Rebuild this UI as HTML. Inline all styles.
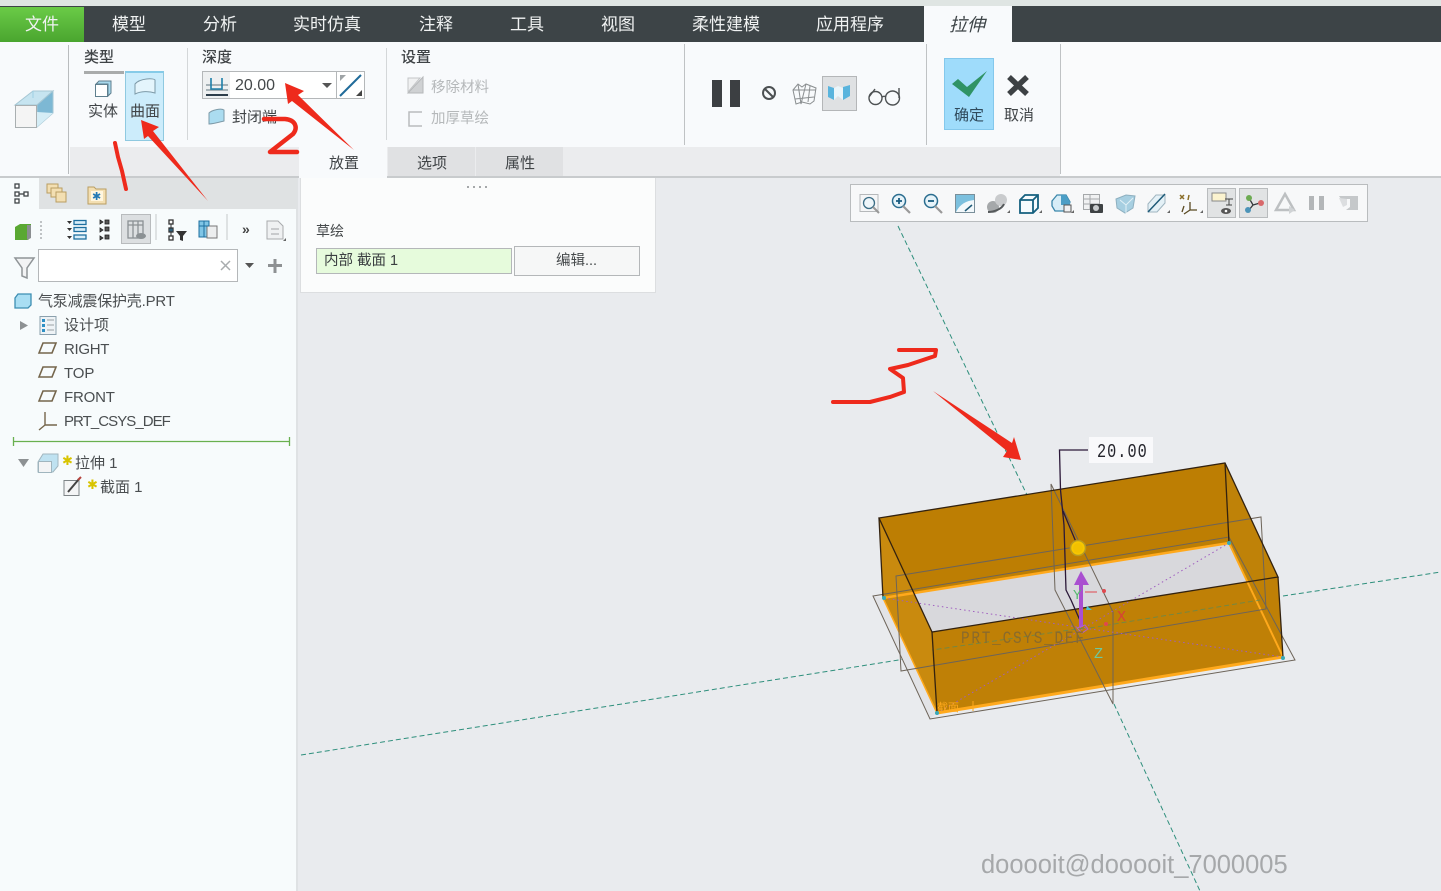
<!DOCTYPE html>
<html lang="zh"><head><meta charset="utf-8"><title>拉伸</title>
<style>
html,body{margin:0;padding:0}
body{width:1441px;height:891px;overflow:hidden;position:relative;background:#e9ebee;font-family:"Liberation Sans","Noto Sans CJK SC",sans-serif;color:#3c4043}
div,span.t{position:absolute}
.t{position:absolute;white-space:nowrap;line-height:20px}
.tab{color:#f0f2f2;font-size:17px;top:15px}
.s{font-size:15px;color:#3f4346}
.g{font-size:15px;color:#b5b8ba}
svg{position:absolute;overflow:visible}
</style></head><body>

<div style="left:0;top:0;width:1441px;height:6px;background:#dfe5e3"></div>
<div style="left:0;top:6px;width:1441px;height:36px;background:#3d4447"></div>
<div style="left:0;top:7px;width:84px;height:35px;background:linear-gradient(#6acb47,#4aa52f)"></div>
<div style="left:924px;top:6px;width:88px;height:36px;background:#f8fafc"></div>
<span class="t tab" style="left:25px">文件</span>
<span class="t tab" style="left:112px">模型</span>
<span class="t tab" style="left:203px">分析</span>
<span class="t tab" style="left:293px">实时仿真</span>
<span class="t tab" style="left:419px">注释</span>
<span class="t tab" style="left:510px">工具</span>
<span class="t tab" style="left:601px">视图</span>
<span class="t tab" style="left:692px">柔性建模</span>
<span class="t tab" style="left:816px">应用程序</span>
<span class="t tab" style="left:949px;color:#3d4447;font-style:italic;font-size:18px">拉伸</span>

<!-- ribbon -->
<div style="left:0;top:42px;width:1441px;height:135px;background:#f8fafc"></div>
<div style="left:1061px;top:42px;width:380px;height:135px;background:#fafbfc"></div>
<div style="left:70px;top:147px;width:990px;height:29px;background:#ebecee"></div>
<div style="left:0;top:176px;width:1441px;height:2px;background:#c8cbcd"></div>
<div style="left:299px;top:147px;width:88px;height:31px;background:#f8fafc"></div>
<div style="left:388px;top:147px;width:87px;height:29px;background:#e0e1e3"></div>
<div style="left:476px;top:147px;width:87px;height:29px;background:#e0e1e3"></div>
<div style="left:68px;top:45px;width:1px;height:129px;background:#b9bcbe"></div>
<div style="left:187px;top:48px;width:1px;height:92px;background:#d4d7d9"></div>
<div style="left:386px;top:48px;width:1px;height:92px;background:#d4d7d9"></div>
<div style="left:684px;top:44px;width:1px;height:101px;background:#bfc2c4"></div>
<div style="left:926px;top:44px;width:1px;height:101px;background:#bfc2c4"></div>
<div style="left:1060px;top:44px;width:1px;height:130px;background:#bfc2c4"></div>

<span class="t s" style="left:84px;top:48px;font-weight:500">类型</span>
<div style="left:84px;top:71px;width:40px;height:3px;background:#a9abab"></div>
<div style="left:125px;top:71px;width:39px;height:70px;box-sizing:border-box;background:#ccecfb;border:1px solid #8fc9e0;border-top:2px solid #86cbe8"></div>
<span class="t s" style="left:88px;top:102px">实体</span>
<span class="t s" style="left:130px;top:102px">曲面</span>
<span class="t s" style="left:202px;top:48px;font-weight:500">深度</span>
<div style="left:202px;top:71px;width:163px;height:28px;box-sizing:border-box;background:#fff;border:1px solid #b4b7b9"></div>
<div style="left:203px;top:72px;width:27px;height:26px;background:#eef0f1"></div>
<div style="left:336px;top:72px;width:1px;height:26px;background:#b4b7b9"></div>
<span class="t" style="left:235px;top:76px;font-size:16px;color:#44484a">20.00</span>
<span class="t s" style="left:232px;top:108px">封闭端</span>
<span class="t s" style="left:401px;top:48px;font-weight:500">设置</span>
<span class="t g" style="left:431px;top:78px;font-size:14.500px">移除材料</span>
<span class="t g" style="left:431px;top:109px;font-size:14.500px">加厚草绘</span>
<span class="t s" style="left:329px;top:154px">放置</span>
<span class="t s" style="left:417px;top:154px">选项</span>
<span class="t s" style="left:505px;top:154px">属性</span>
<div style="left:822px;top:76px;width:35px;height:35px;box-sizing:border-box;background:#dfe1e3;border:1px solid #b4b6b8"></div>
<div style="left:944px;top:58px;width:50px;height:72px;box-sizing:border-box;background:#9fdcfb;border:1px solid #84c8ec"></div>
<span class="t s" style="left:954px;top:106px;color:#2f4a5c">确定</span>
<span class="t s" style="left:1004px;top:106px">取消</span>

<!-- ribbon icons -->
<svg style="left:0;top:0" width="1441" height="178" viewBox="0 0 1441 178">
  <!-- big extrude -->
  <path d="M15 105L33 91H53L37 105Z" fill="#c6e4f0" stroke="#a6c7d4"/>
  <path d="M37 105L53 91V113L37 127Z" fill="#7db8d4" stroke="#a6c7d4"/>
  <path d="M37 127L53 113L37 112Z" fill="#d5edf6"/>
  <path d="M33 91V98" stroke="#9fd0e5"/>
  <rect x="15.500" y="105.500" width="21" height="22" fill="#f4f4f4" stroke="#a9afb1"/>
  <!-- solid -->
  <rect x="95.500" y="84.500" width="12" height="12" fill="#fff" stroke="#5f7f8e"/>
  <path d="M96 84l3-3h12v12l-3 3V84z" fill="#a8d9ed" stroke="#5f7f8e"/>
  <!-- surface -->
  <path d="M135 84c5-6 19-6 20-4v13c-6-2-14-2-20 1z" fill="#e4f5fc" stroke="#7d9aa8"/>
  <!-- depth btn -->
  <g stroke="#2d3d4a" stroke-width="1.300" fill="none">
    <path d="M206 85h22M206 90h22" stroke="#7c8b94"/>
    <path d="M211 78v11h11V78" stroke="#1d7fa9" stroke-width="1.600"/>
    <path d="M206 95h22" stroke-width="2"/>
  </g>
  <path d="M322 83h10l-5 5z" fill="#555"/>
  <path d="M340 96L361 75" stroke="#216b9a" stroke-width="2"/>
  <path d="M340 75h6l-6 6z" fill="#9ea3a6"/>
  <path d="M362 96h-6l6-6z" fill="#444"/>
  <!-- closed end -->
  <path d="M209 113c3-3 12-5 15-3v11c-4 1-11 3-15 3z" fill="#abdcf0" stroke="#7d9aa8"/>
  <!-- remove mat -->
  <path d="M408 93h15V77z" fill="#cfd1d3" stroke="#b5b7b9"/>
  <path d="M408 78h12L408 92z" fill="#f0f1f2" stroke="#c3c5c7"/>
  <path d="M422 112h-13v14h13" fill="none" stroke="#b9bbbd" stroke-width="1.500"/>
  <!-- pause -->
  <rect x="712" y="80" width="10" height="27" fill="#3c3f42"/>
  <rect x="730" y="80" width="10" height="27" fill="#3c3f42"/>
  <circle cx="769" cy="93" r="6" fill="none" stroke="#4c5052" stroke-width="2"/>
  <path d="M765 89l8 8" stroke="#4c5052" stroke-width="2"/>
  <g stroke="#8a8e90" fill="none" stroke-width="1">
    <path d="M793 90l5-6 4 3 4-3 10 4-2 13-4 3-8-2-6 2-3-14z"/>
    <path d="M798 84l3 20M806 84l-5 20M793 90l23 0M795 99l19-2M810 86l-2 16"/>
  </g>
  <path d="M828 86l6 2v12l-6-3zM843 87l7-2v11l-7 4z" fill="#59b4dd"/>
  <path d="M834 88l4-2 5 2v12l-5-4-4 4z" fill="#eaf5fa"/>
  <g fill="none" stroke="#4d5153" stroke-width="1.400">
    <circle cx="875.500" cy="98" r="6.500"/><circle cx="892.500" cy="98" r="7"/>
    <path d="M882 97c2-1 3-1 4 0M869 97l6-8M899 98V88"/>
  </g>
  <!-- check and x -->
  <path d="M952 84L958 79L967 87L987 71L969 97Z" fill="#2f9365"/>
  <path d="M1009 77l18 17M1027 77l-18 17" stroke="#3d4144" stroke-width="5.500"/>
</svg>

<!-- left panel -->
<div style="left:0;top:178px;width:297px;height:713px;background:#f7fbfc"></div>
<div style="left:296px;top:178px;width:2px;height:713px;background:#dfe2e4"></div>
<div style="left:39px;top:178px;width:258px;height:31px;background:#dfe2e3"></div>
<div style="left:38px;top:249px;width:200px;height:33px;box-sizing:border-box;background:#fff;border:1px solid #b4b7b9"></div>
<span class="t" style="left:38px;top:292px;font-size:15px;letter-spacing:-.2px;color:#4a4e50">气泵减震保护壳.PRT</span>
<span class="t" style="left:64px;top:316px;font-size:15px;color:#4a4e50">设计项</span>
<span class="t" style="left:64px;top:340px;font-size:15px;letter-spacing:-.3px;color:#4a4e50">RIGHT</span>
<span class="t" style="left:64px;top:364px;font-size:15px;letter-spacing:-.1px;color:#4a4e50">TOP</span>
<span class="t" style="left:64px;top:388px;font-size:15px;letter-spacing:-.2px;color:#4a4e50">FRONT</span>
<span class="t" style="left:64px;top:412px;font-size:15px;letter-spacing:-.95px;color:#4a4e50">PRT_CSYS_DEF</span>
<span class="t" style="left:75px;top:454px;font-size:15px;color:#4a4e50">拉伸 1</span>
<span class="t" style="left:100px;top:478px;font-size:15px;color:#4a4e50">截面 1</span>

<svg style="left:0;top:178px" width="300" height="330" viewBox="0 178 300 330">
  <g fill="#fff" stroke="#3f4447" stroke-width="1.300">
    <rect x="15" y="184" width="4" height="4"/><rect x="15" y="192" width="4" height="4"/><rect x="15" y="199" width="4" height="4"/><rect x="24" y="192" width="4" height="4"/>
    <path d="M19 194h5" fill="none"/>
  </g>
  <g fill="#f3dfb2" stroke="#b99d62">
    <rect x="47" y="184" width="11" height="9"/><rect x="51" y="188" width="11" height="9"/><rect x="56" y="192" width="10" height="10"/>
    <path d="M88 187h6l2 2h10v15H88z"/>
  </g>
  <path d="M91 191h12v10H91z" fill="#fff6df" stroke="none"/>
  <text x="92" y="200" font-size="11" fill="#2379b5" font-family="DejaVu Sans">✱</text>
  <!-- toolbar -->
  <path d="M15 227l5-3h11v13l-3 3H15z" fill="#5aa832"/><path d="M27 225h4v13l-4 2z" fill="#8b8f91"/>
  <path d="M41 221v18" stroke="#bfc3c5" stroke-width="2" stroke-dasharray="2 2"/>
  <g fill="#d8eefa" stroke="#1e6f9f" stroke-width="1.300">
    <rect x="74" y="220.500" width="12" height="4"/><rect x="74" y="227.500" width="12" height="4"/><rect x="74" y="235" width="12" height="4"/>
  </g>
  <path d="M67 221h5l-2.500 3zM67 228h5l-2.500 3zM67 236h5l-2.500 3z" fill="#333"/>
  <g fill="#555" stroke="#222" stroke-width=".8">
    <rect x="105" y="220" width="4" height="4"/><rect x="105" y="227" width="4" height="4"/><rect x="105" y="235" width="4" height="4"/>
    <path d="M100 220l3 2-3 2zM100 228l3 2-3 2zM100 236l3 2-3 2z"/>
  </g>
  <rect x="121.500" y="214.500" width="29" height="29" fill="#dcdfe1" stroke="#b8bbbd"/>
  <g stroke="#8b9194" fill="none" stroke-width="1.300"><rect x="128" y="221" width="15" height="17"/><path d="M133 221v17M138 221v17M128 225h15"/></g>
  <ellipse cx="141" cy="236" rx="5" ry="3" fill="#8b9194"/>
  <path d="M156 214v26M227 214v26" stroke="#c5c8ca"/>
  <g fill="#fff" stroke="#333" stroke-width="1.300"><rect x="169" y="220" width="4" height="4"/><rect x="169" y="228" width="4" height="4" fill="#2d8fc4"/><rect x="169" y="236" width="4" height="4"/></g>
  <path d="M171 224v12" stroke="#333"/>
  <path d="M176 231h11l-4 5v5l-3-1v-4z" fill="#333"/>
  <g fill="#7fc5e6" stroke="#1e6f9f"><rect x="199" y="221" width="10" height="16"/></g>
  <rect x="207" y="226" width="10" height="12" fill="#eceeef" stroke="#777"/>
  <path d="M204 221v16M199 226h10" stroke="#1e6f9f"/>
  <text x="242" y="234" font-size="14" font-weight="bold" fill="#444" font-family="Liberation Sans">»</text>
  <path d="M267 221h11l5 5v13h-16z" fill="#eff1f2" stroke="#a8abad"/>
  <path d="M271 229h8M271 234h8" stroke="#a0a3a5"/>
  <path d="M283 241l3-3v3z" fill="#666"/>
  <!-- filter row -->
  <path d="M15 258h19l-7 10v10l-5-2v-8z" fill="#f2f3f4" stroke="#8f9497" stroke-width="1.500"/>
  <path d="M221 261l9 9M230 261l-9 9" stroke="#a8acae" stroke-width="1.500"/>
  <path d="M245 263h9l-4.500 5z" fill="#555"/>
  <path d="M268 265.500h14M275 259v14" stroke="#8e9193" stroke-width="3"/>
  <!-- tree icons -->
  <path d="M15 298l3-4h13v11l-3 3H15z" fill="#a9def3" stroke="#3d8eb2" stroke-width="1.300"/>
  <path d="M20 321l8 4.500-8 4.500z" fill="#8d9193"/>
  <rect x="40" y="316.500" width="16" height="18" fill="#eef3f6" stroke="#8ba0ad"/>
  <g fill="#2d8fc4"><rect x="42" y="319" width="3" height="3"/><rect x="42" y="324" width="3" height="3"/><rect x="42" y="329" width="3" height="3"/></g>
  <path d="M47 320h7M47 325h7M47 330h7" stroke="#9aa0a4"/>
  <g fill="none" stroke="#75664c" stroke-width="1.600">
    <path d="M39 353l4-10h13l-4 10z"/><path d="M39 377l4-10h13l-4 10z"/><path d="M39 401l4-10h13l-4 10z"/>
  </g>
  <path d="M45 412v13H57M45 425l-6 5" fill="none" stroke="#75664c" stroke-width="1.400"/>
  <path d="M13 441.500h277" stroke="#69b04f" stroke-width="1.300"/>
  <path d="M13.500 437v9M289.500 437v9" stroke="#69b04f" stroke-width="1.300"/>
  <path d="M18 459h11l-5.500 8z" fill="#8d9193"/>
  <path d="M38 462l5-8h15l0 12-5 6H38z" fill="#bfe2f1" stroke="#a0b5be"/>
  <rect x="38.500" y="461.500" width="13" height="11" fill="#f3f4f5" stroke="#a0b5be"/>
  <text x="62" y="465" font-size="13" fill="#d8c400" font-family="DejaVu Sans">✱</text>
  <text x="87" y="489" font-size="13" fill="#d8c400" font-family="DejaVu Sans">✱</text>
  <rect x="64" y="480.500" width="15" height="15" fill="#f4f5f6" stroke="#7e8487"/>
  <path d="M68 492l11-13" stroke="#444" stroke-width="2"/><path d="M78 480l3-3" stroke="#b5433d" stroke-width="2"/>
</svg>

<!-- placement panel -->
<div style="left:300px;top:178px;width:356px;height:115px;box-sizing:border-box;background:#fbfcfc;border:1px solid #dcdee0;border-top:none"></div>
<div style="left:467px;top:186px;width:22px;height:2px;background:repeating-linear-gradient(90deg,#a5a8aa 0 2px,transparent 2px 6px)"></div>
<span class="t" style="left:316px;top:221px;font-size:14px;color:#45494b">草绘</span>
<div style="left:316px;top:248px;width:196px;height:26px;box-sizing:border-box;background:#e6fbdc;border:1px solid #b4b7b9"></div>
<span class="t" style="left:324px;top:251px;font-size:14.500px;color:#3b3f41">内部 截面 1</span>
<div style="left:514px;top:246px;width:126px;height:30px;box-sizing:border-box;background:#f6f7f7;border:1px solid #b4b7b9"></div>
<span class="t" style="left:556px;top:251px;font-size:14.500px;color:#45494b">编辑...</span>

<!-- view toolbar -->
<div style="left:850px;top:184px;width:518px;height:38px;box-sizing:border-box;background:#f7f8f9;border:1px solid #b9bcbe"></div>
<div style="left:1207px;top:188px;width:29px;height:30px;box-sizing:border-box;background:#e1e3e4;border:1px solid #b9bcbe"></div>
<div style="left:1239px;top:188px;width:29px;height:30px;box-sizing:border-box;background:#e1e3e4;border:1px solid #b9bcbe"></div>
<svg style="left:850px;top:184px" width="518" height="38" viewBox="850 184 518 38">
  <rect x="860" y="194.500" width="18" height="17" fill="#f5f6f7" stroke="#b5b8ba"/>
  <circle cx="869" cy="203" r="5.500" fill="#eef6fa" stroke="#3a6d85" stroke-width="1.300"/>
  <path d="M873 207l6 6" stroke="#999" stroke-width="2"/>
  <circle cx="899" cy="201" r="6.500" fill="#e6f3f9" stroke="#2a6d8f" stroke-width="1.500"/>
  <path d="M896 201h6M899 198v6" stroke="#1a5c80" stroke-width="1.800"/>
  <path d="M903 206l7 7" stroke="#999" stroke-width="2.200"/>
  <circle cx="931" cy="201" r="6.500" fill="#e6f3f9" stroke="#2a6d8f" stroke-width="1.500"/>
  <path d="M928 201h6" stroke="#1a5c80" stroke-width="1.800"/>
  <path d="M935 206l7 7" stroke="#999" stroke-width="2.200"/>
  <rect x="955.500" y="194.500" width="19" height="18" fill="#7cc0de" stroke="#7a8f9a"/>
  <path d="M956 212c4-8 10-11 18-12v12z" fill="#f2f8fb"/>
  <path d="M965 211l7-6" stroke="#1e5a78" stroke-width="1.500"/>
  <circle cx="993" cy="207" r="6" fill="#a5a8aa"/><circle cx="1001" cy="200" r="6" fill="#c9cbcd"/>
  <path d="M988 212c6 0 14-3 16-8" stroke="#55595b" fill="none" stroke-width="2"/>
  <path d="M1010 213h-3l3-3z" fill="#666"/>
  <path d="M1020 200l5-5h13v13l-5 5h-13z" fill="#f6fbfd" stroke="#15607f" stroke-width="1.800"/>
  <path d="M1020 200h13v13M1033 200l5-5" fill="none" stroke="#15607f" stroke-width="1.800"/>
  <path d="M1042 213h-3l3-3z" fill="#666"/>
  <path d="M1052 201l5-6h9l4 7-3 9h-12l-3-5z" fill="#d7edf7" stroke="#3b87ab" stroke-width="1.300"/>
  <path d="M1061 195l5 0 4 7v3h-9z" fill="#4b9ec6"/>
  <rect x="1064" y="205" width="7" height="7" fill="#f0f1f2" stroke="#555"/>
  <path d="M1074 213h-3l3-3z" fill="#666"/>
  <rect x="1083.500" y="194.500" width="16" height="15" fill="#f0f1f2" stroke="#a5a8aa"/>
  <path d="M1084 199h16M1084 204h16M1090 195v14" stroke="#a5a8aa"/>
  <rect x="1090" y="204" width="13" height="9" rx="1" fill="#3e4244"/><circle cx="1096" cy="208" r="3" fill="#c8cbcd"/>
  <path d="M1116 199l10-4 9 1-2 12-8 5-8-5z" fill="#a7cfe1" stroke="#8dafbf"/>
  <path d="M1120 200l6 5 7-7M1126 205v8" stroke="#e3f1f7" fill="none"/>
  <path d="M1148 204l8-9h9v8l-8 9h-9z" fill="#e4f1f7" stroke="#9fb5c0"/>
  <path d="M1148 212l17-18" stroke="#1e5a78" stroke-width="1.500"/>
  <path d="M1170 213h-3l3-3z" fill="#666"/>
  <path d="M1180 195l4 4M1184 195l-4 4M1189 195l-1 5" stroke="#8a6e28" stroke-width="1.500"/>
  <path d="M1190 202v8h7M1190 210l-6 4M1184 206l-2 6" stroke="#5a4a22" fill="none" stroke-width="1.300"/>
  <path d="M1203 213h-3l3-3z" fill="#666"/>
  <rect x="1212" y="193" width="14" height="8" fill="#fbf3cf" stroke="#888"/>
  <path d="M1225 199h8M1229 199v6M1226 205h6" stroke="#444"/>
  <ellipse cx="1226" cy="211" rx="5" ry="3" fill="#555"/><circle cx="1226" cy="211" r="1.300" fill="#fff"/>
  <path d="M1249 198l4 7 7-2M1253 205l-4 5" stroke="#33383b" fill="none" stroke-width="1.300"/>
  <circle cx="1249" cy="198" r="3" fill="#6dab52"/><circle cx="1261" cy="203" r="3" fill="#d8696b"/><circle cx="1248" cy="210" r="3" fill="#4c94b8"/>
  <path d="M1285 194l9 16h-18z" fill="none" stroke="#bdc0c2" stroke-width="2.500"/>
  <path d="M1289 206l6 4-6 4z" fill="#d0d3d5"/>
  <rect x="1309" y="196" width="5" height="14" fill="#b3b6b8"/><rect x="1319" y="196" width="5" height="14" fill="#b3b6b8"/>
  <path d="M1339 196h19v14h-12l4-3v-8h-9z" fill="#c5c8ca"/>
  <path d="M1339 198l8 1v6l-4 2z" fill="#dcdee0"/>
</svg>

<!-- graphics -->
<svg style="left:0;top:0" width="1441" height="891" viewBox="0 0 1441 891">
  <!-- datum axes -->
  <g fill="none" stroke="#2e8f7c" stroke-width="1" stroke-dasharray="5 3">
    <path d="M301 755L905 659M1283 596L1441 572"/>
    <path d="M898 226L1027 495M1114 704L1200 891"/>
  </g>
  <!-- box -->
  <path d="M873 596L883 598L937 713L930 719Z" fill="#e2e3e6"/>
  <path d="M883 598L1229 543L1283 657L937 713Z" fill="#d8d8dc"/>
  <path d="M879 518L1225 463L1229 543L883 598Z" fill="#bd7e03"/>
  <path d="M879 518L932 632L937 713L883 598Z" fill="#c98a0e"/>
  <path d="M1225 463L1278 577L1283 657L1229 543Z" fill="#bf8208"/>
  <path d="M932 632L1278 577L1283 657L937 713Z" fill="#bf8006"/>
  <!-- orange sketch edges -->
  <g fill="none" stroke="#ffa91c">
    <path d="M883 598L1229 543" stroke-width="2.500"/>
    <path d="M1229 543L1283 657" stroke-width="2"/>
    <path d="M1283 657L937 713" stroke-width="3"/>
    <path d="M937 713L883 598" stroke-width="1.500"/>
  </g>
  <!-- datum planes -->
  <g fill="none" stroke="#6d6459" stroke-width="1">
    <path d="M873 596L1229 537L1295 660L930 719Z"/>
    <path d="M896 576L1261 517L1266 609L901 671Z"/>
    <path d="M1051 484L1113 612L1113 704L1055 590Z"/>
  </g>
  <!-- dotted diagonals -->
  <g fill="none" stroke="#a05fc0" stroke-width="1" stroke-dasharray="1.500 3">
    <path d="M884 598L1084 628L1229 543"/>
    <path d="M937 713L1084 628L1283 657"/>
  </g>
  <path d="M1084 628L932 650" stroke="#2e8f7c" stroke-dasharray="5 3" opacity=".5"/>
  <path d="M1090 628L1260 600" stroke="#2e8f7c" stroke-dasharray="5 3" opacity=".5"/>
  <!-- black edges -->
  <g fill="none" stroke="#33220f" stroke-width="1.300">
    <path d="M879 518L1225 463L1278 577L932 632Z"/>
    <path d="M879 518L883 598M1225 463L1229 543M1278 577L1283 657M932 632L937 713"/>
  </g>
  <!-- dim leader -->
  <path d="M1088 450H1059.500L1060.500 490L1064 525L1066 590L1071 600L1082 625M1063 511L1076 542" fill="none" stroke="#2b1838" stroke-width="1.300"/>
  <rect x="1089" y="437" width="64" height="26" fill="#f9f9fb"/>
  <text transform="translate(1097 457) scale(.8 1)" font-family="Liberation Mono" font-size="19" letter-spacing="1.300" fill="#24242c">20.00</text>
  <!-- drag handle -->
  <circle cx="1078" cy="548" r="7.500" fill="#f7c700" stroke="#b89a20" stroke-width="1.500"/>
  <circle cx="1078" cy="548" r="5" fill="#f2c100"/>
  <!-- arrow -->
  <path d="M1081 571l-7 14h5v42h4v-42h6z" fill="#a94fd0"/>
  <path d="M1085 592h12" stroke="#e0484f"/><circle cx="1104" cy="591" r="2" fill="#e0484f"/>
  <circle cx="1106" cy="624" r="2" fill="#e0484f"/>
  <path d="M1087 606l5 4h-6z" fill="#43c6d8"/>
  <path d="M1077 628l8-3 3 4-6 4z" fill="none" stroke="#b060d0"/>
  <text x="1073" y="599" font-family="Liberation Mono" font-size="14" fill="#56b870">Y</text>
  <text x="1117" y="621" font-family="Liberation Mono" font-size="15" fill="#d84038">X</text>
  <text x="1094" y="658" font-family="Liberation Mono" font-size="15" fill="#6cc8a0">Z</text>
  <text transform="translate(961 643) scale(.8 1)" font-family="Liberation Mono" font-size="18" letter-spacing="2.200" fill="#8a6a2c">PRT_CSYS_DEF</text>
  <text x="937" y="711" font-size="11" fill="#ffa91c" font-family="Liberation Sans,Noto Sans CJK SC,sans-serif">截面</text>
  <path d="M973 701v10" stroke="#ffa91c"/>
  <g fill="#38a8b8"><circle cx="884" cy="598" r="2"/><circle cx="1229" cy="543" r="2"/><circle cx="1283" cy="658" r="2"/><circle cx="937" cy="713" r="2"/></g>

  <text x="981" y="873" font-family="Liberation Sans" font-size="25.500" fill="#a6a8aa">dooooit@dooooit_7000005</text>

  <!-- red annotations -->
  <g fill="none" stroke="#ee2a1c" stroke-linejoin="round" stroke-linecap="round">
    <path d="M115 143l3 14 4 14 4 18" stroke-width="4"/>
    <path d="M264 119H285C296 120 298 128 293 134L270 152H297" stroke-width="4.500"/>
    <path d="M899 350H936L935 356L908 365L890 369L903 378L904 392L890 397L870 402H833" stroke-width="4"/>
  </g>
  <g fill="#ee2a1c">
    <path d="M141 120L159 127L153 131L208 201L148 136L144 139Z"/>
    <path d="M285 83L304 91L298 95L354 150L292 101L288 104Z"/>
    <path d="M1021 460L1003 457L1007 451L933 391L1012 443L1014 437Z"/>
  </g>
</svg>
</body></html>
